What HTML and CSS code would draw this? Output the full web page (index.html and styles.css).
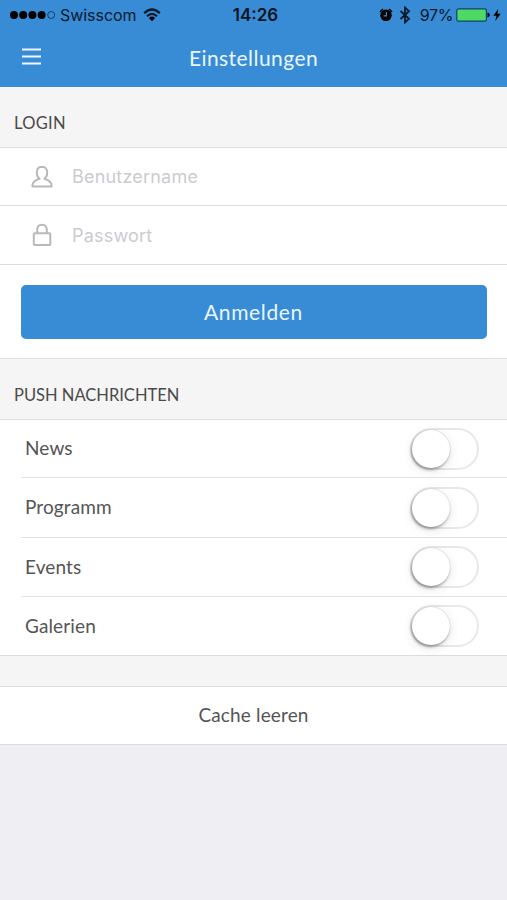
FILE: index.html
```html
<!DOCTYPE html>
<html lang="de">
<head>
<meta charset="utf-8">
<title>Einstellungen</title>
<link rel="stylesheet" href="styles.css">
</head>
<body>
<header class="top">
  <div class="status">
    <div class="carrier">
      <svg width="48" height="12" viewBox="0 0 48 12"><circle cx="5" cy="6" r="4"/><circle cx="14.2" cy="6" r="4"/><circle cx="23.4" cy="6" r="4"/><circle cx="32.6" cy="6" r="4"/><circle cx="42.2" cy="6" r="3.5" class="ring"/></svg>
      <span class="carrier-name">Swisscom</span>
      <svg class="wifi" width="18" height="14" viewBox="0 0 18 14"><g class="arcs"><path d="M1.2 5.2Q9-2.2 16.8 5.2"/><path d="M4 8.2Q9 3.6 14 8.2"/></g><path d="M5.9 10Q9 7.2 12.1 10L9 13.2Z"/></svg>
    </div>
    <div class="time">14:26</div>
    <div class="power">
      <svg width="14" height="14" viewBox="0 0 14 14"><circle cx="7" cy="7.3" r="5.8"/><path d="M1 4.2A8 8 0 0 1 4 1.2M10 1.2A8 8 0 0 1 13 4.2" class="stroke"/><path d="M7.4 4V7.8H4.5" class="hands"/></svg>
      <svg class="bt" width="12" height="18" viewBox="0 0 12 18"><path d="M1.5 5L10 12.8L6 16.5V1.5L10 5.2L1.5 13" class="btline"/></svg>
      <span class="percent">97%</span>
      <svg class="battery" width="34" height="14" viewBox="0 0 34 14"><rect x=".8" y=".9" width="29.6" height="12.2" rx="1.6" class="cell"/><path d="M31.5 4.6Q33.8 5 33.8 7T31.5 9.4Z"/></svg>
      <svg class="bolt" width="8" height="12" viewBox="0 0 8 12"><path d="M5.2 0L.3 6.7H3.4L2.3 12L7.7 4.8H4.5Z"/></svg>
    </div>
  </div>
  <div class="nav">
    <svg class="menu" width="19" height="17" viewBox="0 0 19 17"><path d="M0 1.5H19M0 8.5H19M0 15.5H19"/></svg>
    <h1>Einstellungen</h1>
  </div>
</header>
<main>
  <h2 class="section login-title"><span>LOGIN</span></h2>
  <form class="login">
    <label class="field"><svg width="22" height="24" viewBox="0 0 22 24"><path d="M11 1.8C7.7 1.8 5.8 4.1 5.8 7.4C5.8 10.2 6.8 12.4 8.6 13.8C5 15 1.9 16.4 1.5 19.8V21.6H20.5V19.8C20.1 16.4 17 15 13.4 13.8C15.2 12.4 16.2 10.2 16.2 7.4C16.2 4.1 14.3 1.8 11 1.8Z"/></svg><span class="user">Benutzername</span></label>
    <label class="field"><svg width="22" height="24" viewBox="0 0 22 24"><rect x="2.8" y="10.3" width="16.5" height="11.8" rx=".8"/><path d="M6.2 10V6.8C6.2 3.7 8.2 1.8 11 1.8S15.8 3.7 15.8 6.8V10"/></svg><span class="pass">Passwort</span></label>
    <div class="submit"><button type="button"><span>Anmelden</span></button></div>
  </form>
  <h2 class="section push-title"><span>PUSH NACHRICHTEN</span></h2>
  <ul class="options">
    <li><span class="news">News</span><i class="switch"></i></li>
    <li><span class="programm">Programm</span><i class="switch"></i></li>
    <li><span class="events">Events</span><i class="switch"></i></li>
    <li><span class="galerien">Galerien</span><i class="switch"></i></li>
  </ul>
  <div class="gap"></div>
  <div class="cache"><span>Cache leeren</span></div>
</main>
</body>
</html>
```

FILE: styles.css
```css
* { box-sizing: border-box; }
body {
  margin: 0;
  height: 900px;
  overflow: hidden;
  background: #eeeef3;
  color: #555;
  font-family: Lato, sans-serif;
}
svg { display: block; flex: none; }
h1, h2, ul { margin: 0; padding: 0; font-weight: 400; }
span { white-space: nowrap; }

.top { height: 87px; background: #388cd6; }
.status {
  display: grid;
  grid-template-columns: 1fr auto 1fr;
  align-items: center;
  height: 30px;
  padding: 0 6px 0 9px;
  color: #06192b;
  font-family: Inter, sans-serif;
  font-size: 16px;
}
.carrier, .power { display: flex; align-items: center; }
.carrier-name { margin-left: 3px; letter-spacing: -.05px; }
.wifi { margin-left: 7px; }
.ring { fill: none; stroke: #12416d; stroke-width: 1; }
.arcs { fill: none; stroke: #06192b; stroke-width: 2.2; }
.time { color: #06131f; font-weight: 600; font-size: 17px; padding-left: 1px; }
.power { justify-content: flex-end; }
.stroke { fill: none; stroke: #000; stroke-width: 1.4; }
.hands { fill: none; stroke: #388cd6; stroke-width: 1.2; }
.bt { margin-left: 6px; }
.btline { fill: none; stroke: #06192b; stroke-width: 1.8; }
.percent { margin-left: 9px; letter-spacing: -.4px; }
.battery { margin-left: 3px; }
.cell { fill: #4cd964; stroke: #12416d; stroke-width: 1.2; }
.bolt { margin-left: 3px; }

.nav {
  display: grid;
  grid-template-columns: 80px 1fr 80px;
  align-items: center;
  height: 57px;
}
.menu { margin: -4px 0 0 22px; stroke: #f0f8ff; stroke-width: 2; }
.nav h1 { color: #e9f6ff; font-size: 21px; line-height: 55px; height: 57px; text-align: center; letter-spacing: .45px; }

.section {
  display: flex;
  align-items: center;
  height: 61px;
  padding: 12px 14px 0;
  background: #f5f5f5;
  border-bottom: 1px solid #dfdfdf;
  color: #4a4a4a;
  font-size: 16.5px;
}
.login-title { letter-spacing: .3px; }

.login { background: #fff; }
.field {
  display: flex;
  align-items: center;
  height: 58px;
  padding-left: 31px;
  border-bottom: 1px solid #dcdcde;
  color: #cbcbd0;
  font: 18px Inter, sans-serif;
  letter-spacing: .2px;
}
.field + .field { height: 59px; }
.field svg { margin-right: 19px; fill: none; stroke: #b9b9b9; stroke-width: 2; stroke-linejoin: round; }
.submit { height: 94px; padding: 20px 20px 0 21px; border-bottom: 1px solid #dfdfdf; }
.submit button {
  display: block;
  width: 100%;
  height: 54px;
  padding: 0 1px 1px 0;
  border: 0;
  border-radius: 5px;
  background: #388cd6;
  color: #e9f6ff;
  font: 21px Lato, sans-serif;
  letter-spacing: .65px;
}

.options { background: #fff; list-style: none; border-bottom: 1px solid #dcdcdc; }
.options li {
  display: flex;
  align-items: center;
  justify-content: space-between;
  height: 59px;
  margin-left: 21px;
  padding: 0 28px 0 4px;
  border-bottom: 1px solid #e2e2e2;
  font-size: 19px;
}
.options li:first-child { height: 58px; }
.options li:nth-child(2) { height: 60px; }
.options li:last-child { height: 58px; border-bottom: 0; }
.options span { margin-top: -2px; letter-spacing: .12px; }
.switch {
  width: 69px;
  height: 42px;
  border: 2px solid #e8e8e8;
  border-radius: 21px;
  background: #fff;
}
.switch::before {
  content: "";
  display: block;
  width: 38px;
  height: 38px;
  border-radius: 50%;
  background: #fff;
  box-shadow: 0 0 1px #aaa, -1px 2px 3px rgba(0, 0, 0, .35), 0 3px 12px rgba(0, 0, 0, .1);
}

.gap { height: 31px; background: #f5f5f5; border-bottom: 1px solid #dcdcdc; }
.cache {
  display: flex;
  align-items: center;
  justify-content: center;
  height: 58px;
  padding-bottom: 3px;
  background: #fff;
  border-bottom: 1px solid #dcdce0;
  font-size: 19px;
  letter-spacing: .15px;
}
```
